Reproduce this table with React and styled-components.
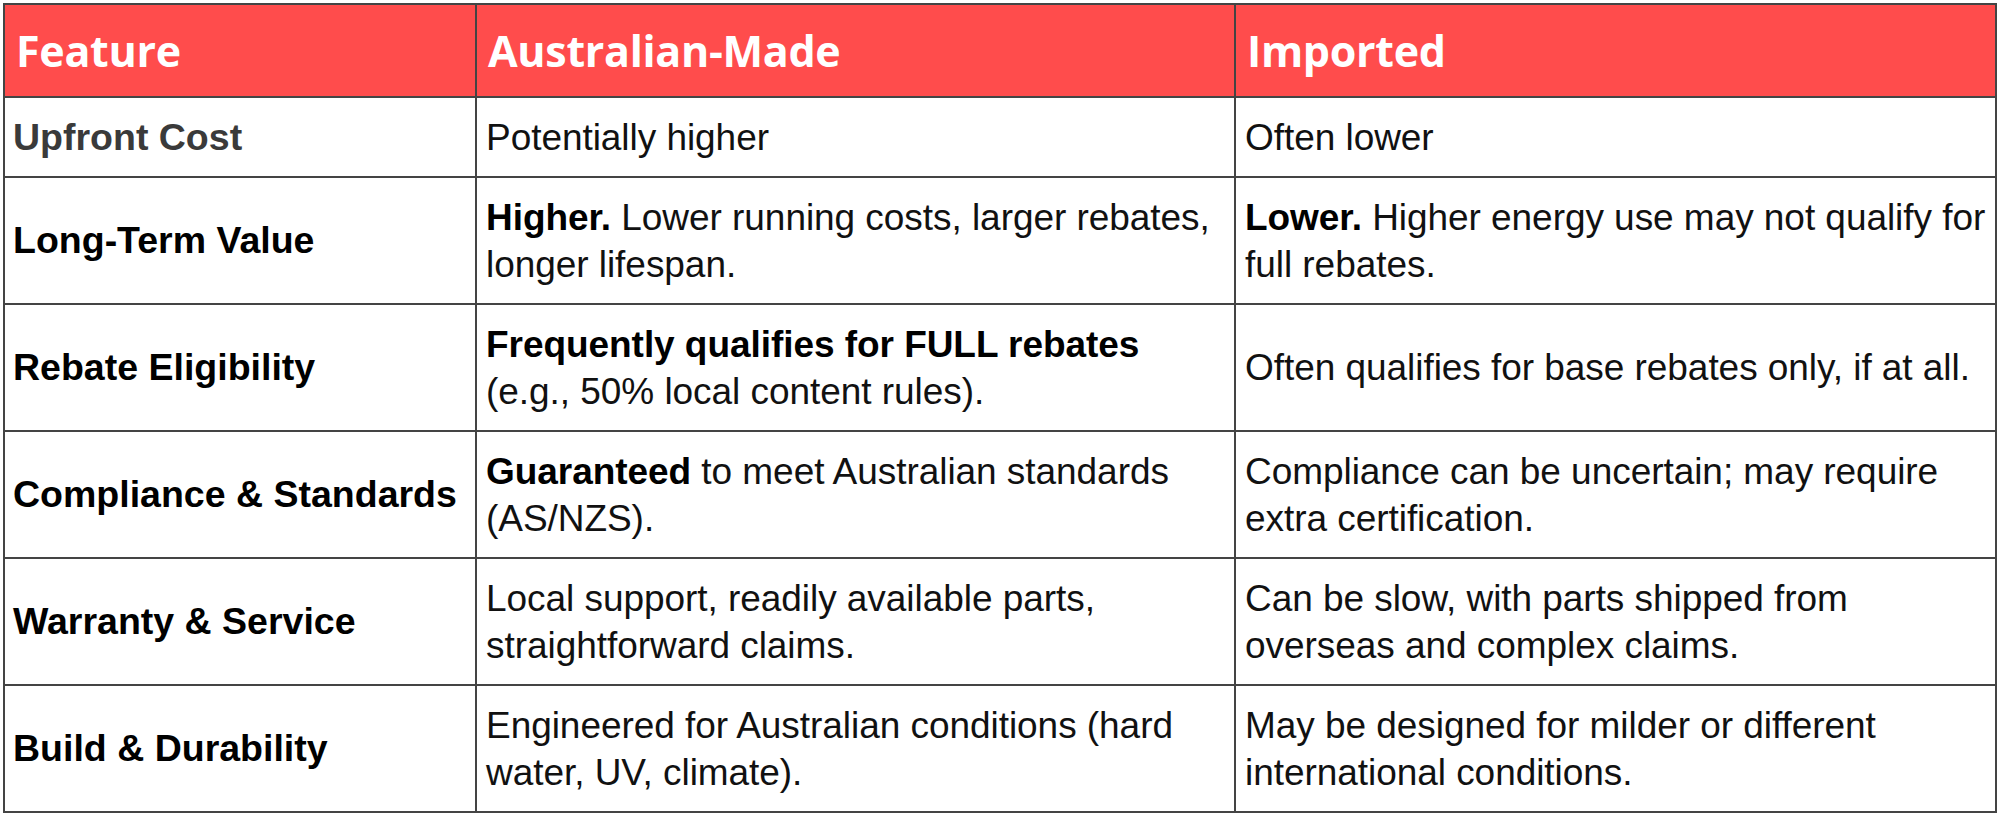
import styled, { createGlobalStyle } from 'styled-components';

const GlobalStyle = createGlobalStyle`
  body {
    margin: 0;
    background: #ffffff;
    font-family: "Liberation Sans", Arial, sans-serif;
  }
`;

const rows = [
  {
    feature: 'Upfront Cost',
    muted: true,
    local: { text: 'Potentially higher' },
    imported: { text: 'Often lower' },
  },
  {
    feature: 'Long-Term Value',
    local: { lead: 'Higher.', text: ' Lower running costs, larger rebates, longer lifespan.' },
    imported: { lead: 'Lower.', text: ' Higher energy use may not qualify for full rebates.' },
  },
  {
    feature: 'Rebate Eligibility',
    local: { lead: 'Frequently qualifies for FULL rebates', br: true, text: '(e.g., 50% local content rules).' },
    imported: { text: 'Often qualifies for base rebates only, if at all.' },
  },
  {
    feature: 'Compliance & Standards',
    local: { lead: 'Guaranteed', text: ' to meet Australian standards (AS/NZS).' },
    imported: { text: 'Compliance can be uncertain; may require extra certification.' },
  },
  {
    feature: 'Warranty & Service',
    local: { text: 'Local support, readily available parts, straightforward claims.' },
    imported: { text: 'Can be slow, with parts shipped from overseas and complex claims.' },
  },
  {
    feature: 'Build & Durability',
    local: { text: 'Engineered for Australian conditions (hard water, UV, climate).' },
    imported: { text: 'May be designed for milder or different international conditions.' },
  },
];

const Page = styled.div`
  padding: 3px 5px 0 3px;
`;

const Table = styled.table`
  width: 1992px;
  border-collapse: collapse;
  table-layout: fixed;
  border: 2px solid #444;
`;

const HeadRow = styled.tr`
  height: 93px;
  background: #ff4c4c;
`;

const HeadCell = styled.th`
  border: 2px solid #444;
  padding: 0 11px;
  text-align: left;
  vertical-align: middle;
  color: #ffffff;
  font-family: "Open Sans", "Liberation Sans", sans-serif;
  font-weight: 700;
  font-size: 43px;
  letter-spacing: -0.3px;
`;

const BodyRow = styled.tr`
  height: ${(p) => (p.$short ? '80px' : '127px')};
`;

const LabelCell = styled.td`
  border: 2px solid #444;
  padding: 0 8px;
  vertical-align: middle;
  font-size: 37.5px;
  font-weight: 700;
  color: ${(p) => (p.$muted ? '#3a3a3a' : '#000000')};
  white-space: nowrap;
`;

const Cell = styled.td`
  border: 2px solid #444;
  padding: 0 1px 0 9px;
  vertical-align: middle;
  font-size: 37px;
  line-height: 47px;
  letter-spacing: -0.05px;
  color: #111111;
`;

const Lead = styled.strong`
  font-weight: 700;
  color: #000000;
`;

const Content = ({ lead, br, text }) => (
  <>
    {lead && <Lead>{lead}</Lead>}
    {br && <br />}
    {text}
  </>
);

export default function App() {
  return (
    <>
      <GlobalStyle />
      <Page>
        <Table>
          <colgroup>
            <col style={{ width: '472px' }} />
            <col style={{ width: '759px' }} />
            <col style={{ width: '761px' }} />
          </colgroup>
          <thead>
            <HeadRow>
              <HeadCell>Feature</HeadCell>
              <HeadCell>Australian-Made</HeadCell>
              <HeadCell>Imported</HeadCell>
            </HeadRow>
          </thead>
          <tbody>
            {rows.map((row, i) => (
              <BodyRow key={row.feature} $short={i === 0}>
                <LabelCell $muted={row.muted}>{row.feature}</LabelCell>
                <Cell>
                  <Content {...row.local} />
                </Cell>
                <Cell>
                  <Content {...row.imported} />
                </Cell>
              </BodyRow>
            ))}
          </tbody>
        </Table>
      </Page>
    </>
  );
}
